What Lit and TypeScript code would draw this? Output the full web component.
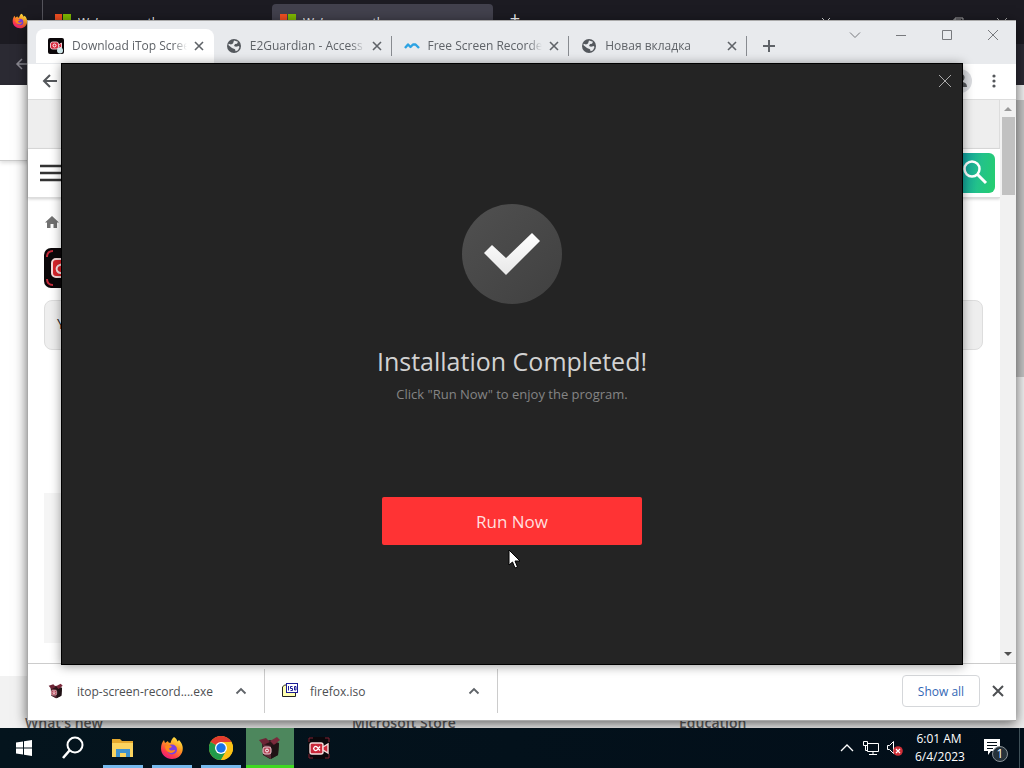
import { LitElement, html, css, svg } from "lit";
import { customElement, property } from "lit/decorators.js";

const crossPath = svg`<path d="M4 4l8 8M12 4l-8 8" fill="none" stroke="currentColor"/>`;

const recorderIcon = html`<svg viewBox="0 0 40 40" width="100%" height="100%" aria-hidden="true">
  <rect width="40" height="40" rx="7" fill="#0b0709"/>
  <path d="M3 9Q3 3 9 3M31 3q6 0 6 6M37 31q0 6-6 6M9 37q-6 0-6-6" fill="none" stroke="#c22a3a" stroke-width="2"/>
  <rect x="8" y="11" width="20" height="18" rx="4" fill="#d8252c" stroke="#f6dcdc" stroke-width="2"/>
  <path d="M28 18l7-4v12l-7-4z" fill="#d8252c" stroke="#f6dcdc" stroke-width="2"/>
  <path d="M22 18q-3-3-6-1a4 4 0 1 0 4 6l3-4" fill="none" stroke="#fbe3e3" stroke-width="2"/>
</svg>`;

const taskRecorderIcon = html`<svg viewBox="0 0 24 24" width="24" height="24" aria-hidden="true">
  <rect x="1" y="1" width="22" height="22" rx="2" fill="#0a070b"/>
  <path d="M2 6V2h4M18 2h4v4M22 18v4h-4M6 22H2v-4" fill="none" stroke="#7d2436"/>
  <rect x="3" y="7" width="13" height="11" rx="2" fill="#c9283a" stroke="#f6dcdc" stroke-width="1.400"/>
  <path d="M16 11l5-3v9l-5-3z" fill="#c9283a" stroke="#f6dcdc" stroke-width="1.400"/>
  <path d="M13 10.500l-3 3.500a2 2 0 1 1 0-3l3 3.500" fill="none" stroke="#fff" stroke-width="1.300"/>
</svg>`;

const tabRecorderIcon = html`<svg viewBox="0 0 16 16" width="16" height="16" aria-hidden="true">
  <rect width="16" height="16" rx="2" fill="#0b0709"/>
  <rect x="2.500" y="4" width="8" height="7" rx="2" fill="#d8253a" stroke="#f3c4cb"/>
  <path d="M10.500 7l3-2v5l-3-1.500z" fill="#d8253a" stroke="#f3c4cb"/>
  <circle cx="6.500" cy="7.500" r="1.500" fill="none" stroke="#fff"/>
  <circle cx="12" cy="12.500" r="3" fill="#cfe6ea"/>
</svg>`;

const boxIcon = html`<svg viewBox="0 0 24 24" width="100%" height="100%" aria-hidden="true">
  <path d="M4 7l8-3 9 3-1 12-8 4-7-4z" fill="#2a1418"/>
  <path d="M5 8l8 2v13l-7-4z" fill="#5c2a36"/>
  <path d="M1 4l7-2 4 4-7 3z" fill="#6d2536"/>
  <path d="M12 5l7-4 3 3-6 5z" fill="#7b2a3c"/>
  <path d="M13 10l8-3-1 12-7 4z" fill="#1f1215"/>
  <rect x="5" y="11" width="8" height="7" rx="2" fill="#b5495a" stroke="#ecc8cf" stroke-width="1"/>
  <circle cx="9" cy="14.500" r="1.500" fill="none" stroke="#fff"/>
</svg>`;

const globeIcon = html`<svg viewBox="0 0 16 16" width="16" height="16" aria-hidden="true">
  <circle cx="8" cy="8" r="7" fill="#54585d"/>
  <path d="M8 2.500l4 1.200-1 2-2 .3-1 2 2 .8 3-.8.400 1.200-1.400 3-2.400 1-.6-2L6 10 2.300 7l.5-1.300L5 6.500l2-1z" fill="#e8eaed"/>
</svg>`;

const waveIcon = html`<svg viewBox="0 0 16 16" width="16" height="16" aria-hidden="true">
  <path d="M1 10l3-3.500L6.500 9 9 6.500l2.500 0L15 10" fill="none" stroke="#2ca3e3" stroke-width="2.400" stroke-linejoin="round"/>
</svg>`;

const firefoxIcon = html`<svg viewBox="0 0 24 24" width="100%" height="100%" aria-hidden="true">
  <defs><linearGradient id="fx" x1=".8" y1="0" x2=".2" y2="1">
    <stop offset="0" stop-color="#fff04a"/><stop offset=".4" stop-color="#ff9a1f"/><stop offset=".75" stop-color="#ff3a4c"/><stop offset="1" stop-color="#e31587"/>
  </linearGradient></defs>
  <path d="M14 1c2 1 3 3 3.500 4.500L19 4c3 3 4.500 7 3.500 11-1.200 5-5.500 8-10.500 8C6 23 1 18.500 1 12.500 1 9 2 6 4 4l1 3 3-2c0 1 1 2 2.500 2 .5-2 1.500-4.500 3.500-6z" fill="url(#fx)"/>
  <circle cx="12" cy="13.500" r="5" fill="#7a3fe0"/>
  <path d="M5 10c2-1.500 4.500-1.500 6.500 0 .8.800-.5 1.800-2 2-1 .8 0 2.500 2 2.500 1.500 0 2.500-.8 3.700-.3-1 2.500-4 3.300-6.200 2.300C6.500 15.500 5 13 5 10z" fill="#ff8a1a"/>
</svg>`;

const microsoftIcon = html`<svg viewBox="0 0 16 16" width="16" height="16" aria-hidden="true">
  <path d="M0 0h7v7H0z" fill="#f25022"/><path d="M8 0h8v7H8z" fill="#7fba00"/>
  <path d="M0 8h7v8H0z" fill="#00a4ef"/><path d="M8 8h8v8H8z" fill="#ffb900"/>
</svg>`;

const box = css`
  * { box-sizing: border-box; }
  svg { display: block; flex: none; }
  button, input { font: inherit; color: inherit; }
  button { border: 0; padding: 0; background: none; display: flex; align-items: center; justify-content: center; cursor: default; }
`;

@customElement("firefox-window")
class FirefoxWindow extends LitElement {
  static styles = [box, css`
    :host { display: flex; flex-direction: column; background: #fff; color: #fbfbfe; font-size: 12px; }
    .tabs { display: flex; height: 44px; background: #1c1b22; align-items: flex-start; }
    .pin { width: 43px; height: 44px; padding: 13px 0 0 12px; border-right: 1px solid #55545c; flex: none; }
    .pin span { display: block; width: 16px; height: 16px; }
    .tab { display: flex; gap: 7px; width: 221px; height: 40px; margin: 4px 4px 0 4px; padding: 10px 8px 0 8px; border-radius: 4px; line-height: 18px; flex: none; }
    .tab.on { background: #42414d; margin-left: 0; }
    .title { flex: 1; overflow: hidden; white-space: nowrap; }
    .new { width: 32px; height: 36px; margin-left: 2px; font-size: 18px; }
    .caps { margin-left: auto; display: flex; padding: 15px 14px 0 0; gap: 28px; }
    .bar { height: 41px; background: #2b2a33; padding: 12px 14px; color: #8b8a93; flex: none; }
    .head { height: 76px; border-bottom: 1px solid #ccc; box-shadow: 0 2px 4px #0002; flex: none; }
    .body { flex: 1; }
    .page { flex: 1; display: flex; min-height: 0; }
    .doc { flex: 1; display: flex; flex-direction: column; }
    .scroll { width: 17px; background: #f0f0f0; display: flex; flex-direction: column; }
    .thumb { height: 277px; margin-top: 15px; background: #c4c4c4; }
    .foot { background: #f2f2f2; height: 92px; padding: 37px 0 0 25px; display: grid; grid-template-columns: 327px 327px 1fr; font: 600 14px/20px "Open Sans", "Noto Sans", sans-serif; color: #616161; }
    h2 { font: inherit; margin: 0; }
  `];
  render() {
    const tab = (on: boolean) => html`<div class="tab ${on ? "on" : ""}">
      ${microsoftIcon}<span class="title">We’re sorry, the page</span>
      <button aria-label="Close tab"><svg width="16" height="16">${crossPath}</svg></button></div>`;
    return html`
      <div class="tabs">
        <div class="pin"><span>${firefoxIcon}</span></div>
        ${tab(false)}${tab(true)}
        <button class="new" aria-label="New tab">+</button>
        <div class="caps">
          <svg width="16" height="16"><path d="M4 3l4 4 4-4" fill="none" stroke="#ddd"/></svg>
          <svg width="16" height="16"></svg>
          <svg width="16" height="16"></svg>
          <svg width="16" height="16"><path d="M3 5h8v8H3zM5 5V3h8v8h-2" fill="none" stroke="#aaa"/></svg>
          <svg width="16" height="16"><path d="M3 3l10 10M13 3L3 13" stroke="#aaa"/></svg>
        </div>
      </div>
      <div class="bar"><svg width="16" height="16"><path d="M14 8H3M8 3L3 8l5 5" fill="none" stroke="currentColor" stroke-width="1.500"/></svg></div>
      <div class="page">
        <div class="doc">
          <div class="head"></div><div class="body"></div>
          <div class="foot"><h2>What's new</h2><h2>Microsoft Store</h2><h2>Education</h2></div>
        </div>
        <div class="scroll"><div class="thumb"></div></div>
      </div>`;
  }
}

@customElement("chrome-tab")
class ChromeTab extends LitElement {
  @property() label = "";
  @property() icon: unknown = null;
  @property({ type: Boolean, reflect: true }) active = false;
  static styles = [box, css`
    :host { display: flex; flex: 0 1 178px; min-width: 0; height: 34px; position: relative; color: #5f6368; }
    :host([active]) { background: #fff; border-radius: 8px 8px 0 0; }
    .row { flex: 1; min-width: 0; display: flex; align-items: center; padding: 0 6px 0 12px; }
    .icon { width: 16px; height: 16px; flex: none; }
    .label { flex: 1; margin: 0 4px 0 8px; overflow: hidden; white-space: nowrap; font-size: 12px; line-height: 18px; mask-image: linear-gradient(90deg, #000 88%, transparent); }
    .line { width: 1px; height: 20px; align-self: center; background: #888b90; }
    :host([active]) .line { background: none; }
  `];
  render() {
    return html`<div class="row"><span class="icon">${this.icon}</span><span class="label">${this.label}</span>
      <button aria-label="Close tab"><svg width="16" height="16" stroke-width="1.600">${crossPath}</svg></button></div>
      <span class="line"></span>`;
  }
}

@customElement("chrome-window")
class ChromeWindow extends LitElement {
  static styles = [box, css`
    :host { display: flex; flex-direction: column; background: #fff; border: 1px solid #aaa; border-width: 1px 0 1px 1px; box-shadow: 0 3px 12px #0009; color: #5f6368; }
    .strip { height: 43px; flex: none; display: flex; background: #e8eaed; padding: 8px 8px 0 8px; }
    .tabs { display: flex; flex: 0 1 711px; min-width: 0; }
    .new { width: 28px; height: 34px; margin-left: 8px; }
    .caps { margin-left: auto; display: flex; gap: 30px; height: 16px; padding-right: 7px; color: #77797d; margin-top: -2px; }
    .bar { height: 36px; flex: none; display: flex; align-items: center; justify-content: space-between; padding: 0 14px 2px; border-bottom: 1px solid #ddd; }
    .right { display: flex; gap: 14px; align-items: center; }
    .view { flex: 1; display: flex; min-height: 0; }
    .doc { flex: 1; min-width: 0; }
    .banner { height: 49px; background: #eee; border: 1px solid #ddd; border-width: 0 1px 1px 0; }
    .head { height: 49px; display: flex; align-items: center; justify-content: space-between; padding: 0 5px 0 12px; border-bottom: 1px solid #ddd; box-shadow: 0 1px 3px #0003; }
    .find { width: 56px; height: 40px; border-radius: 6px; background: linear-gradient(100deg, #0a8ca8 25%, #23c28a 70%, #25cf6e); justify-content: flex-end; padding-right: 6px; }
    .main { padding: 16px; }
    .logo { width: 40px; height: 40px; margin: 18px 0 12px; }
    .note { height: 50px; border: 1px solid #ddd; border-radius: 8px; background: #eee; padding: 12px; color: #222; font-size: 14px; line-height: 22px; margin: 0 1px 0 0; }
    .card { width: 60%; height: 150px; margin-top: 143px; background: #f5f5f5; }
    .scroll { width: 16px; background: #f1f1f1; display: flex; flex-direction: column; align-items: center; padding: 6px 0; flex: none; }
    .thumb { width: 13px; height: 78px; margin: 5px 0 auto; background: #c1c1c1; }
    .shelf { height: 57px; flex: none; display: flex; align-items: center; border-top: 1px solid #ccc; color: #4d4f52; font-size: 12px; padding-bottom: 2px; }
    .file { display: flex; align-items: center; height: 44px; border-right: 1px solid #ccc; width: 237px; padding: 0 15px 0 20px; }
    .file + .file { width: 233px; padding-left: 17px; }
    .file .ic { width: 16px; height: 16px; margin-right: 13px; }
    .file + .file .ic { margin-right: 12px; }
    .file .nm { flex: 1; }
    .all { margin-left: auto; width: 78px; height: 32px; border: 1px solid #d5d7da; border-radius: 4px; color: #3367b5; font-size: 12px; }
    .x { margin: 0 10px; }
  `];
  render() {
    const chevron = html`<svg width="16" height="16"><path d="M3.500 10.500L8 6l4.500 4.500" fill="none" stroke="#5f6368" stroke-width="1.800"/></svg>`;
    return html`
      <div class="strip">
        <div class="tabs">
          <chrome-tab active label="Download iTop Screen Recorder" .icon=${tabRecorderIcon}></chrome-tab>
          <chrome-tab label="E2Guardian - Access Denied" .icon=${globeIcon}></chrome-tab>
          <chrome-tab label="Free Screen Recorder Online" .icon=${waveIcon}></chrome-tab>
          <chrome-tab label="Новая вкладка" .icon=${globeIcon}></chrome-tab>
        </div>
        <button class="new" aria-label="New tab"><svg width="16" height="16"><path d="M8 2v12M2 8h12" stroke="#5f6368" stroke-width="2"/></svg></button>
        <div class="caps">
          <svg width="16" height="16"><path d="M3 5.500l5 5 5-5" fill="none" stroke="currentColor"/></svg>
          <svg width="16" height="16"><path d="M3 8.500h10" stroke="currentColor"/></svg>
          <svg width="16" height="16"><path d="M3.500 3.500h9v9h-9z" fill="none" stroke="currentColor"/></svg>
          <svg width="16" height="16"><path d="M3 3l10 10M13 3L3 13" stroke="currentColor"/></svg>
        </div>
      </div>
      <div class="bar">
        <button aria-label="Back"><svg width="16" height="16"><path d="M15 8H2M8 2L2 8l6 6" fill="none" stroke="#54575b" stroke-width="2"/></svg></button>
        <div class="right">
          <svg width="24" height="24"><circle cx="12" cy="12" r="12" fill="#dadce0"/><circle cx="13" cy="8.500" r="3.500" fill="#54575b"/><path d="M6 18q0-5 7-5 6 0 6 5z" fill="#54575b"/></svg>
          <svg width="16" height="16" fill="#54575b"><circle cx="8" cy="3" r="1.600"/><circle cx="8" cy="8" r="1.600"/><circle cx="8" cy="13" r="1.600"/></svg>
        </div>
      </div>
      <div class="view">
        <div class="doc">
          <div class="banner"></div>
          <div class="head">
            <button aria-label="Menu"><svg width="26" height="18"><path d="M0 2h26M0 9h26M0 16h26" stroke="#333" stroke-width="2.400"/></svg></button>
            <button class="find" aria-label="Search"><svg width="28" height="28"><circle cx="11" cy="10" r="7.500" fill="none" stroke="#fff" stroke-width="2.500"/><path d="M16 15l9 9" stroke="#fff" stroke-width="3"/></svg></button>
          </div>
          <div class="main">
            <svg width="16" height="16"><path d="M8 2l7 6.500h-2V14H9.500v-4h-3v4H3V8.500H1z" fill="#707070"/></svg>
            <div class="logo">${recorderIcon}</div>
            <div class="note">You are on the download page</div>
            <div class="card"></div>
          </div>
        </div>
        <div class="scroll">
          <svg width="8" height="6"><path d="M0 5l4-4 4 4z" fill="#999"/></svg>
          <div class="thumb"></div>
          <svg width="8" height="6"><path d="M0 1l4 4 4-4z" fill="#505050"/></svg>
        </div>
      </div>
      <div class="shelf">
        <div class="file"><span class="ic">${boxIcon}</span><span class="nm">itop-screen-record....exe</span>${chevron}</div>
        <div class="file"><span class="ic"><svg width="16" height="16">
          <path d="M.5 4l2-2h11v11.500H.5z" fill="#ffffb0" stroke="#222"/><rect x="4.500" y=".5" width="11" height="9" fill="#fff" stroke="#1d1d96"/>
          <path d="M6.500 3v4.500M10.500 3.500h-2v2h2v2h-2M12.500 3.500h1.500v3.500h-1.500z" fill="none" stroke="#1d1d96"/></svg></span>
          <span class="nm">firefox.iso</span>${chevron}</div>
        <button class="all">Show all</button>
        <button class="x" aria-label="Close downloads bar"><svg width="16" height="16" stroke-width="2"><path d="M3 3l10 10M13 3L3 13" stroke="currentColor"/></svg></button>
      </div>`;
  }
}

@customElement("setup-window")
class SetupWindow extends LitElement {
  static styles = [box, css`
    :host { display: flex; flex-direction: column; align-items: center; background: #242424; border: 1px solid #000; box-shadow: 0 1px 10px #0006; padding-top: 140px; }
    .close { position: absolute; top: 9px; right: 9px; color: #aaa; }
    h1 { margin: 39px 0 5px; font-size: 25px; line-height: 36px; font-weight: 400; color: #d2d2d2; }
    p { margin: 0 0 93px; font-size: 13px; line-height: 20px; color: #858585; }
    .run { width: 260px; height: 48px; border-radius: 2px; background: #ff3334; color: #ffdede; font-size: 17px; }
  `];
  render() {
    return html`
      <button class="close" aria-label="Close"><svg width="16" height="16"><path d="M2 2l12 12M14 2L2 14" stroke="currentColor"/></svg></button>
      <svg width="100" height="100" viewBox="0 0 100 100" aria-hidden="true">
        <defs><linearGradient id="g" x1="0" y1="0" x2="1" y2="1"><stop offset="0" stop-color="#505050"/><stop offset="1" stop-color="#404040"/></linearGradient>
        <linearGradient id="w" x1="0" y1="0" x2="0" y2="1"><stop offset="0" stop-color="#fff"/><stop offset="1" stop-color="#e8e8e8"/></linearGradient></defs>
        <circle cx="50" cy="50" r="50" fill="url(#g)"/>
        <path d="M22 49l8-8 14 13 26-25 8 8-34 34z" fill="url(#w)"/>
      </svg>
      <h1>Installation Completed!</h1>
      <p>Click "Run Now" to enjoy the program.</p>
      <button class="run">Run Now</button>`;
  }
}

@customElement("task-bar")
class TaskBar extends LitElement {
  static styles = [box, css`
    :host { display: flex; background: linear-gradient(90deg, #04141d, #020e19); color: #fff; font-size: 12px; }
    .apps { display: flex; gap: 1px; }
    .app { width: 48px; height: 40px; }
    .find { width: 49px; }
    .app span { width: 24px; height: 24px; }
    .open { background: linear-gradient(#76b9ed, #76b9ed) 50% 100% / 40px 3px no-repeat; }
    .run { background: linear-gradient(#3fd820, #3fd820) 0 100% / 100% 3px no-repeat #4d875d; }
    .tray { margin-left: auto; display: flex; align-items: center; }
    .icons { display: flex; gap: 8px; margin-right: 12px; }
    .clock { width: 48px; text-align: center; line-height: 18px; white-space: nowrap; }
    .note { width: 28px; height: 28px; margin-left: 19px; }
    .peek { width: 5px; height: 40px; border-left: 1px solid #3e5058; margin-left: 9px; }
    .count { font-size: 12px; }
  `];
  render() {
    return html`
      <div class="apps">
        <button class="app" aria-label="Start"><svg width="18" height="18"><path d="M1 3.500l7-1v6H1zM9 2.300L17 1v7.500H9zM1 9.500h7v6l-7-1zM9 9.500h8V17l-8-1.300z" fill="#fff"/></svg></button>
        <button class="app find" aria-label="Search"><svg width="24" height="24"><circle cx="13" cy="9" r="7.500" fill="none" stroke="#fff" stroke-width="2"/><path d="M7.500 14.500L1 22" stroke="#fff" stroke-width="2.600"/></svg></button>
        <button class="app open" aria-label="File Explorer"><svg width="24" height="24">
          <path d="M1 3h8l2 2h11v16H1z" fill="#e5a92e"/><path d="M1 7h21v14H1z" fill="#fbd45f"/><path d="M5 21v-8h14v8h-4v-4H9v4z" fill="#3f92cf"/></svg></button>
        <button class="app open" aria-label="Firefox"><span>${firefoxIcon}</span></button>
        <button class="app open" aria-label="Chrome"><svg width="24" height="24" viewBox="0 0 24 24">
          <circle cx="12" cy="12" r="12" fill="#fbc116"/><path d="M12 12L1.600 6A12 12 0 0 1 22.400 6z" fill="#e33b2e"/>
          <path d="M12 12L1.600 6A12 12 0 0 0 12 24l5.200-9z" fill="#229b4a"/><path d="M12 6h10.400a12 12 0 0 1-10.400 18l5.200-9z" fill="#fbc116"/>
          <circle cx="12" cy="12" r="6" fill="#fff"/><circle cx="12" cy="12" r="4.700" fill="#1a73e8"/></svg></button>
        <button class="app run" aria-label="Installer"><span>${boxIcon}</span></button>
        <button class="app" aria-label="Screen recorder"><span>${taskRecorderIcon}</span></button>
      </div>
      <div class="tray">
        <div class="icons">
          <svg width="16" height="16"><path d="M2 11l6-6 6 6" fill="none" stroke="#fff" stroke-width="1.300"/></svg>
          <svg width="16" height="16"><path d="M4.500 3.500h11v8h-11zM10 11.500v3M6 14.500h8M.5 1.500h4v4h-4zM2.500 5.500v5h2" fill="none" stroke="#fff"/></svg>
          <svg width="16" height="16"><path d="M.5 5.500h2l4-4v12l-4-4h-2z" fill="none" stroke="#fff"/><circle cx="11" cy="11" r="4.800" fill="#cf3038"/><path d="M9 9l4 4M13 9l-4 4" stroke="#fff" stroke-width="1.200"/></svg>
        </div>
        <div class="clock">6:01 AM<br>6/4/2023</div>
        <svg class="note" viewBox="0 0 28 28"><path d="M2 5h16v12H9l-3 4v-4H2z" fill="#fff"/><path d="M5 8.500h10M5 11.500h10M5 14.500h6" stroke="#04101a"/>
          <circle cx="18" cy="20" r="7.500" fill="#26323a" stroke="#8a9298"/><text class="count" x="18" y="24" text-anchor="middle" fill="#fff">1</text></svg>
        <span class="peek"></span>
      </div>`;
  }
}

@customElement("app-root")
class AppRoot extends LitElement {
  static styles = css`
    :host { display: block; position: relative; height: 100vh; overflow: hidden; background: #fff; font-family: "Open Sans", "Noto Sans", sans-serif; }
    .back { position: absolute; inset: 0 0 0 0; }
    .browser { position: absolute; inset: 20px 8px 47px 27px; }
    .setup { position: absolute; inset: 63px 61px 103px 61px; }
    .bar { position: absolute; inset: auto 0 0 0; height: 40px; }
    .pointer { position: absolute; left: 508px; top: 549px; }
  `;
  render() {
    return html`
      <firefox-window class="back"></firefox-window>
      <chrome-window class="browser"></chrome-window>
      <setup-window class="setup"></setup-window>
      <task-bar class="bar"></task-bar>
      <svg class="pointer" width="13" height="20" aria-hidden="true"><path d="M1 1v15l3.500-3 2.500 6 2.500-1-2.500-6h5z" fill="#fff" stroke="#000"/></svg>`;
  }
}
